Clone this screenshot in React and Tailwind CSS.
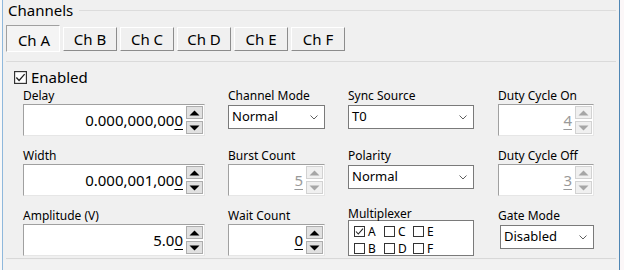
import { useState } from 'react'

const font = "font-['Noto_Sans','DejaVu_Sans',sans-serif]"

function Check({ checked, size = 11 }) {
  return (
    <svg width={size} height={size} viewBox="0 0 11 11" className="shrink-0">
      <rect x="0.5" y="0.5" width="10" height="10" fill="#fff" stroke="#333" strokeWidth="1" />
      {checked && <polyline points="2,5.5 4.3,8 9,2.6" fill="none" stroke="#222" strokeWidth="1.1" />}
    </svg>
  )
}

function Arrow({ up, disabled }) {
  const fill = disabled ? '#a6a6a6' : '#000'
  return (
    <svg width="11" height="6" viewBox="0 0 11 6">
      {up ? <polygon points="0.5,5.5 10.5,5.5 5.5,0.5" fill={fill} /> : <polygon points="0.5,0.5 10.5,0.5 5.5,5.5" fill={fill} />}
    </svg>
  )
}

function SpinBtn({ up, disabled }) {
  return (
    <div
      className={
        'w-[17px] h-[13px] flex items-center justify-center border ' +
        (disabled ? 'bg-[#f0f0f0] border-[#d2d2d2]' : 'bg-[#e1e1e1] border-[#adadad]')
      }
    >
      <Arrow up={up} disabled={disabled} />
    </div>
  )
}

function SpinBox({ main, last, width, disabled }) {
  return (
    <div
      className="flex h-[32px] bg-white border border-t-[#a0a0a0] border-l-[#a0a0a0] border-b-[#e6e6e6] border-r-[#e6e6e6]"
      style={{ width }}
    >
      <div
        className={
          'flex-1 flex items-center justify-end pr-[3px] text-[15px] ' +
          (disabled ? 'text-[#9a9a9a]' : 'text-black')
        }
      >
        <span>{main}</span>
        <span className="underline underline-offset-[3px] decoration-1">{last}</span>
      </div>
      <div className="flex flex-col gap-[2px] pt-[1px] pr-[1px]">
        <SpinBtn up disabled={disabled} />
        <SpinBtn disabled={disabled} />
      </div>
    </div>
  )
}

function Select({ value, width }) {
  return (
    <div
      className="flex items-center h-[24px] bg-white border border-[#7a7a7a] mt-[1px] pl-[3px] pr-[6px] text-[13px] text-black"
      style={{ width }}
    >
      <span className="flex-1">{value}</span>
      <svg width="8" height="5" viewBox="0 0 8 5">
        <polyline points="0.5,0.5 4,4 7.5,0.5" fill="none" stroke="#606060" strokeWidth="1" />
      </svg>
    </div>
  )
}

function Cell({ label, children, last, short }) {
  return (
    <div className={last ? 'h-[50px]' : 'h-[60px]'}>
      <div className={(short ? 'h-[12px] leading-[12px]' : 'h-[16px] leading-[16px]') + ' text-[12px] text-black'}>
        {label}
      </div>
      {children}
    </div>
  )
}

function MuxItem({ label, checked, w }) {
  return (
    <div className="flex items-center gap-[3px] shrink-0 h-[11px]" style={{ width: w }}>
      <Check checked={checked} />
      <span className="text-[12px] leading-[11px]">{label}</span>
    </div>
  )
}

export default function App() {
  const [active, setActive] = useState('Ch A')
  const tabs = ['Ch A', 'Ch B', 'Ch C', 'Ch D', 'Ch E', 'Ch F']

  return (
    <div className={'flex w-[624px] h-[270px] bg-[#f8f8f8] overflow-hidden text-black ' + font}>
      <div className="w-[2px]" />
      <div className="w-[618px] h-full flex flex-col bg-[#f0f0f0] border-x border-l-[#8fb8dc] border-r-[#4f86b4]">
        {/* group header */}
        <div className="flex items-start h-[22px]">
          <span className="pl-[5px] text-[15px] leading-[20px]">Channels</span>
          <div className="flex-1 mt-[10px] ml-[6px] mr-[3px] h-[2px] border-t border-[#dcdcdc] border-b-white" />
        </div>

        {/* tabs */}
        <div className="flex items-start gap-[3px] pl-[3px] mt-[3px] h-[27px]">
          {tabs.map((t) =>
            t === active ? (
              <button
                key={t}
                onClick={() => setActive(t)}
                className="w-[54px] h-[27px] border border-t-[#a0a0a0] border-l-[#a0a0a0] border-r-white border-b-white bg-[#f4f4f4] text-[15px] pt-[3px] pl-[2px]"
              >
                {t}
              </button>
            ) : (
              <button
                key={t}
                onClick={() => setActive(t)}
                className="w-[54px] h-[24px] mt-[2px] border border-t-white border-l-white border-r-[#8c8c8c] border-b-[#8c8c8c] bg-[#f0f0f0] text-[15px] leading-[20px]"
              >
                {t}
              </button>
            )
          )}
        </div>

        <div className="mt-[9px] mx-[3px] h-[2px] border-t border-[#dadada] border-b-white" />

        {/* enabled */}
        <div className="flex items-center gap-[4px] pl-[11px] mt-[5px] h-[18px]">
          <Check checked size={13} />
          <span className="text-[15px] leading-[18px]">Enabled</span>
        </div>

        {/* fields */}
        <div className="flex pl-[20px] mt-[2px]">
          <div className="w-[182px] flex flex-col">
            <Cell label="Delay">
              <SpinBox main="0.000,000,00" last="0" width={182} />
            </Cell>
            <Cell label="Width">
              <SpinBox main="0.000,001,00" last="0" width={182} />
            </Cell>
            <Cell label="Amplitude (V)" last>
              <SpinBox main="5.0" last="0" width={182} />
            </Cell>
          </div>

          <div className="w-[97px] ml-[23px] flex flex-col">
            <Cell label="Channel Mode">
              <Select value="Normal" width={97} />
            </Cell>
            <Cell label="Burst Count">
              <SpinBox main="" last="5" width={97} disabled />
            </Cell>
            <Cell label="Wait Count" last>
              <SpinBox main="" last="0" width={97} />
            </Cell>
          </div>

          <div className="w-[126px] ml-[23px] flex flex-col">
            <Cell label="Sync Source">
              <Select value="T0" width={126} />
            </Cell>
            <Cell label="Polarity">
              <Select value="Normal" width={126} />
            </Cell>
            <Cell label="Multiplexer" last short>
              <div className="h-[36px] w-[126px] bg-white border border-[#7a7a7a] pl-[5px] pt-[5px] flex flex-col gap-[6px]">
                <div className="flex">
                  <MuxItem label="A" checked w={30} />
                  <MuxItem label="C" w={29} />
                  <MuxItem label="E" />
                </div>
                <div className="flex">
                  <MuxItem label="B" w={30} />
                  <MuxItem label="D" w={29} />
                  <MuxItem label="F" />
                </div>
              </div>
            </Cell>
          </div>

          <div className="w-[96px] ml-[24px] flex flex-col">
            <Cell label="Duty Cycle On">
              <SpinBox main="" last="4" width={96} disabled />
            </Cell>
            <Cell label="Duty Cycle Off">
              <SpinBox main="" last="3" width={96} disabled />
            </Cell>
            <Cell label="Gate Mode" last>
              <div className="ml-[2px]">
                <Select value="Disabled" width={94} />
              </div>
            </Cell>
          </div>
        </div>

        <div className="mx-[3px] h-[2px] border-t border-[#d8d8d8] border-b-white" />
        <div className="flex-1 bg-[#f2f2f2]" />
      </div>
      <div className="flex-1 bg-[#fbf7f8]" />
    </div>
  )
}
